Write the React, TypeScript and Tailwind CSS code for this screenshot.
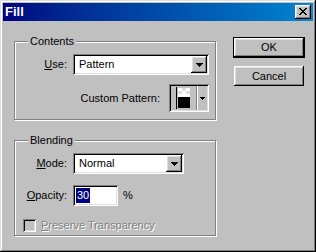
import React from "react";

// Win98-style bevels
const raised =
  "shadow-[inset_-1px_-1px_0_#000,inset_1px_1px_0_#fff,inset_-2px_-2px_0_#808080,inset_2px_2px_0_#dfdfdf]";
const sunken =
  "shadow-[inset_1px_1px_0_#808080,inset_-1px_-1px_0_#fff,inset_2px_2px_0_#000,inset_-2px_-2px_0_#dfdfdf]";
const etched = "border border-[#808080] shadow-[inset_1px_1px_0_#fff,1px_1px_0_#fff]";

function DropArrow() {
  return (
    <div className={`w-[16px] h-full flex items-center justify-center bg-[#c0c0c0] ${raised}`}>
      <svg width="7" height="4" viewBox="0 0 7 4" shapeRendering="crispEdges">
        <path d="M0 0h7v1H0zM1 1h5v1H1zM2 2h3v1H2zM3 3h1v1H3z" fill="#000" />
      </svg>
    </div>
  );
}

function Select({ value, width }: { value: string; width: string }) {
  return (
    <div className={`${width} h-[21px] p-[2px] bg-white flex ${sunken}`}>
      <div className="flex-1 flex items-center pl-[4px] leading-[13px]">{value}</div>
      <DropArrow />
    </div>
  );
}

function GroupLabel({ children }: { children: React.ReactNode }) {
  return (
    <div className="-mt-[7px] ml-[13px] w-fit px-[2px] bg-[#c0c0c0] leading-[13px]">{children}</div>
  );
}

export default function App() {
  return (
    <div
      className={`w-[316px] h-[252px] bg-[#c0c0c0] p-[3px] flex flex-col text-[11px] text-black font-['Liberation_Sans',Arial,sans-serif] shadow-[inset_-1px_-1px_0_#000,inset_1px_1px_0_#dfdfdf,inset_-2px_-2px_0_#808080,inset_2px_2px_0_#fff]`}
    >
      {/* Title bar */}
      <div className="h-[18px] flex items-center justify-between pl-[2px] pr-[2px] bg-linear-to-r from-[#000080] to-[#1084d0]">
        <span className="text-white font-bold text-[13px] leading-[16px]">Fill</span>
        <div className={`w-[16px] h-[14px] bg-[#c0c0c0] flex items-center justify-center ${raised}`}>
          <svg width="8" height="7" viewBox="0 0 8 7" shapeRendering="crispEdges" className="-mt-[1px] -ml-[1px]">
            <path
              d="M0 0h2v1H0zM6 0h2v1H6zM1 1h2v1H1zM5 1h2v1H5zM2 2h4v1H2zM3 3h2v1H3zM2 4h4v1H2zM1 5h2v1H1zM5 5h2v1H5zM0 6h2v1H0zM6 6h2v1H6z"
              fill="#000"
            />
          </svg>
        </div>
      </div>

      <div className="flex items-start pl-[11px] pt-[16px]">
        {/* Left column */}
        <div className="w-[202px] mt-[4px] flex flex-col">
          {/* Contents */}
          <div className={`h-[79px] flex flex-col ${etched}`}>
            <GroupLabel>Contents</GroupLabel>
            <div className="mt-[6px] flex items-center justify-end pr-[6px] gap-[6px]">
              <span>
                <u>U</u>se:
              </span>
              <Select value="Pattern" width="w-[136px]" />
            </div>
            <div className="mt-[9px] flex items-center justify-end pr-[6px] gap-[9px]">
              <span>Custom Pattern:</span>
              <div className={`w-[40px] h-[28px] p-[2px] bg-[#c0c0c0] flex ${sunken}`}>
                <div className="flex-1 flex items-center justify-center">
                  <svg width="15" height="22" viewBox="0 0 15 22" shapeRendering="crispEdges">
                    <rect x="0" y="0" width="15" height="22" fill="#c0c0c0" />
                    <rect x="2" y="1" width="4" height="3" fill="#fff" />
                    <rect x="6" y="1" width="4" height="3" fill="#dfdfdf" />
                    <rect x="10" y="1" width="4" height="3" fill="#fff" />
                    <rect x="2" y="4" width="4" height="3" fill="#dfdfdf" />
                    <rect x="6" y="4" width="4" height="3" fill="#fff" />
                    <rect x="10" y="4" width="4" height="3" fill="#dfdfdf" />
                    <rect x="2" y="7" width="12" height="3" fill="#fff" />
                    <rect x="2" y="10" width="12" height="11" fill="#000" />
                    <rect x="0" y="0" width="1" height="22" fill="#000" />
                  </svg>
                </div>
                <div className="w-[2px] border-l border-[#808080] bg-white" />
                <div className="w-[9px] flex items-center justify-center">
                  <svg width="5" height="3" viewBox="0 0 5 3" shapeRendering="crispEdges">
                    <path d="M0 0h5v1H0zM1 1h3v1H1zM2 2h1v1H2z" fill="#000" />
                  </svg>
                </div>
              </div>
            </div>
          </div>

          {/* Blending */}
          <div className={`mt-[20px] h-[96px] flex flex-col ${etched}`}>
            <GroupLabel>Blending</GroupLabel>
            <div className="mt-[6px] grid grid-cols-[52px_auto] gap-x-[6px] gap-y-[11px] items-center">
              <span className="text-right">
                <u>M</u>ode:
              </span>
              <Select value="Normal" width="w-[111px]" />
              <span className="text-right">
                <u>O</u>pacity:
              </span>
              <div className="flex items-center gap-[5px]">
                <div className={`w-[45px] h-[21px] p-[2px] bg-white flex items-center ${sunken}`}>
                  <span className="ml-[1px] px-[1px] bg-[#000080] text-white leading-[15px]">30</span>
                </div>
                <span>%</span>
              </div>
            </div>
            <div className="mt-[11px] ml-[8px] flex items-center gap-[5px]">
              <div className={`w-[13px] h-[13px] bg-[#c0c0c0] ${sunken}`} />
              <span className="text-[#808080] [text-shadow:1px_1px_0_#fff]">
                <u>P</u>reserve Transparency
              </span>
            </div>
          </div>
        </div>

        {/* Buttons */}
        <div className="ml-[17px] flex flex-col">
          <div className="w-[72px] h-[21px] border border-black">
            <button className={`w-full h-full bg-[#c0c0c0] text-[11px] leading-[13px] ${raised}`}>OK</button>
          </div>
          <button
            className={`mt-[8px] ml-[1px] w-[70px] h-[20px] bg-[#c0c0c0] text-[11px] leading-[13px] ${raised}`}
          >
            Cancel
          </button>
        </div>
      </div>
    </div>
  );
}
